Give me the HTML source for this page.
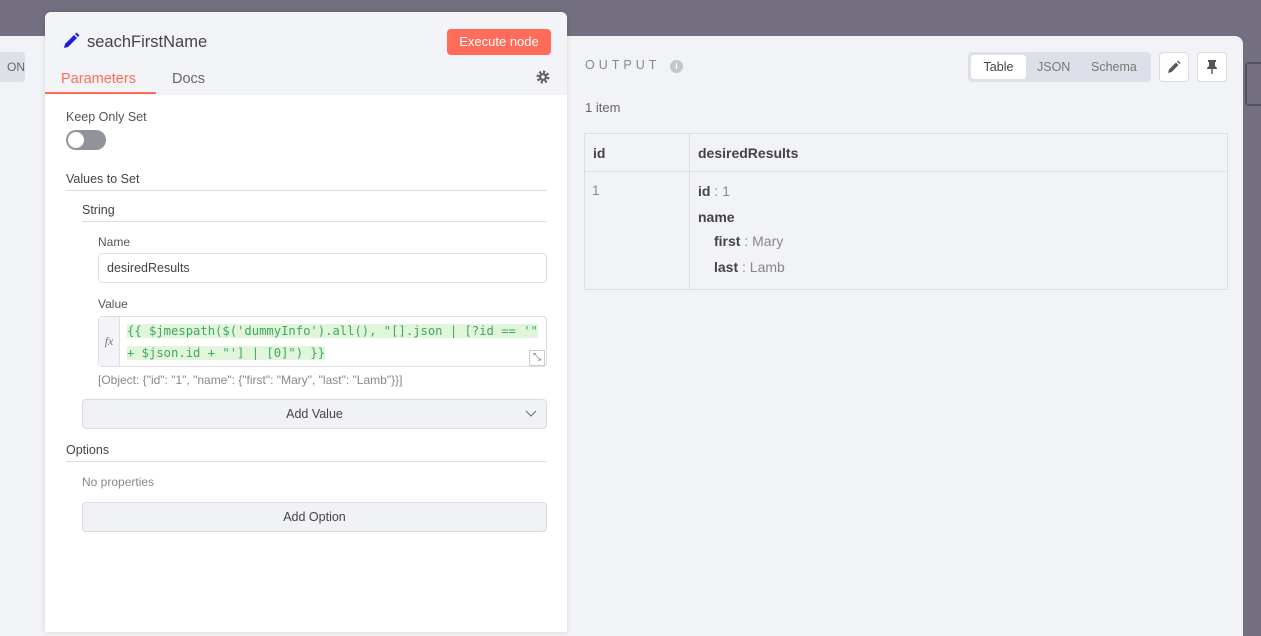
<!DOCTYPE html>
<html><head><meta charset="utf-8"><style>
*{box-sizing:border-box;margin:0;padding:0}
body{width:1261px;height:628px;overflow:hidden;background:#736f80;font-family:"Liberation Sans","DejaVu Sans",sans-serif;position:relative;color:#555}
.abs{position:absolute}
.main{left:0;top:36px;width:1243px;height:600px;background:#f2f3f6;border-radius:0 8px 0 0}
.node{left:45px;top:12px;width:522px;height:620px;background:#fff;border-radius:6px 6px 0 0;box-shadow:0 0 6px rgba(0,0,0,.12);overflow:hidden}
.hdr{left:0;top:0;width:522px;height:83px;background:#f3f4f7}
.lbl{font-size:12.5px;color:#555}
.sec{font-size:12.5px;color:#444;border-bottom:1px solid #dcdde3;padding-bottom:4px}
.inp{border:1px solid #dcdfe6;border-radius:4px;background:#fff}
.btn{background:#f1f2f5;border:1px solid #d8dbe2;border-radius:4px;text-align:center;font-size:12.5px;color:#444}
.th{font-weight:bold;font-size:14px;color:#444}
</style></head><body>
<div class="abs main"></div>
<div class="abs" style="left:1245px;top:62px;width:20px;height:44px;border:2px solid #55525f;border-radius:4px"></div>
<div class="abs" style="left:-20px;top:52px;width:45px;height:30px;background:#dde0e8;border-radius:4px;font-size:12px;color:#666;line-height:30px;text-align:right;padding-right:0px">ON</div>

<div class="abs node">
  <div class="abs hdr"></div>
  <svg class="abs" style="left:17px;top:20px" width="18" height="18" viewBox="0 0 18 18"><path d="M2 16 L3 12 L12 3 L15 6 L6 15 Z" fill="#1a1ae0"/><path d="M13 2 L14.5 0.5 L17.5 3.5 L16 5 Z" fill="#1a1ae0"/></svg>
  <div class="abs" style="left:42px;top:21px;font-size:16.5px;color:#444">seachFirstName</div>
  <div class="abs" style="left:402px;top:17px;width:104px;height:26px;background:#ff6d5a;border-radius:4px;color:#fff;font-size:13px;line-height:26px;text-align:center">Execute node</div>
  <div class="abs" style="left:16px;top:59px;font-size:14.5px;color:#ff6d5a">Parameters</div>
  <div class="abs" style="left:0;top:80px;width:111px;height:2px;background:#ff6d5a"></div>
  <div class="abs" style="left:127px;top:59px;font-size:14.5px;color:#666">Docs</div>
  <svg class="abs" style="left:491px;top:58px" width="14" height="14" viewBox="0 0 14 14"><circle cx="7" cy="7" r="5" fill="none" stroke="#666" stroke-width="3" stroke-dasharray="2.2 1.7"/><circle cx="7" cy="7" r="4" fill="#666"/><circle cx="7" cy="7" r="1.7" fill="#f3f4f7"/></svg>

  <div class="abs lbl" style="left:21px;top:98px">Keep Only Set</div>
  <div class="abs" style="left:21px;top:118px;width:40px;height:20px;border-radius:10px;background:#909399"></div>
  <div class="abs" style="left:23px;top:120px;width:16px;height:16px;border-radius:8px;background:#fff"></div>

  <div class="abs sec" style="left:21px;top:160px;width:481px">Values to Set</div>
  <div class="abs sec" style="left:37px;top:191px;width:465px">String</div>
  <div class="abs lbl" style="left:53px;top:223px;font-size:12px">Name</div>
  <div class="abs inp" style="left:53px;top:241px;width:449px;height:30px;font-size:12.5px;color:#444;line-height:28px;padding-left:8px">desiredResults</div>
  <div class="abs lbl" style="left:53px;top:285px;font-size:12px">Value</div>
  <div class="abs inp" style="left:53px;top:304px;width:449px;height:51px"></div>
  <div class="abs" style="left:54px;top:305px;width:21px;height:49px;background:#f3f4f7;border-right:1px solid #dcdfe6;font-family:'Liberation Serif',serif;font-style:italic;font-size:12px;color:#777;text-align:center;line-height:49px">fx</div>
  <div class="abs" style="left:82px;top:308px;width:420px;font-family:'DejaVu Sans Mono','Liberation Mono',monospace;font-size:12.2px;color:#3eaa5c;line-height:22px"><span style="background:#e1f4dc">{{ $jmespath($('dummyInfo').all(), "[].json | [?id == '"</span><br><span style="background:#e1f4dc">+ $json.id + "'] | [0]") }}</span></div>
  <div class="abs" style="left:484px;top:338px;width:16px;height:16px;border:1px solid #ccc;background:#fff;font-size:10px;color:#666;text-align:center;line-height:14px">⤡</div>
  <div class="abs" style="left:53px;top:361px;font-size:12px;color:#888">[Object: {"id": "1", "name": {"first": "Mary", "last": "Lamb"}}]</div>
  <div class="abs btn" style="left:37px;top:387px;width:465px;height:30px;line-height:28px">Add Value</div>
  <svg class="abs" style="left:480px;top:398px" width="12" height="8" viewBox="0 0 12 8"><path d="M1 1 L6 6 L11 1" fill="none" stroke="#777" stroke-width="1.2"/></svg>
  <div class="abs sec" style="left:21px;top:431px;width:481px">Options</div>
  <div class="abs" style="left:37px;top:463px;font-size:12px;color:#888">No properties</div>
  <div class="abs btn" style="left:37px;top:490px;width:465px;height:30px;line-height:28px">Add Option</div>
</div>

<div class="abs" style="left:585px;top:58px;font-size:12.5px;letter-spacing:4px;color:#888">OUTPUT</div>
<div class="abs" style="left:670px;top:60px;width:13px;height:13px;border-radius:7px;background:#c4c6cc;color:#fff;font-size:9px;font-weight:bold;text-align:center;line-height:13px">i</div>
<div class="abs" style="left:585px;top:100px;font-size:13px;color:#666">1 item</div>
<div class="abs" style="left:968px;top:52px;width:183px;height:30px;background:#dde0e8;border-radius:4px"></div>
<div class="abs" style="left:971px;top:55px;width:55px;height:24px;background:#fff;border-radius:3px;font-size:12.5px;color:#444;text-align:center;line-height:24px">Table</div>
<div class="abs" style="left:1037px;top:55px;font-size:12.5px;color:#777;line-height:24px">JSON</div>
<div class="abs" style="left:1091px;top:55px;font-size:12.5px;color:#777;line-height:24px">Schema</div>
<div class="abs" style="left:1159px;top:52px;width:30px;height:30px;background:#fff;border:1px solid #d8dbe2;border-radius:4px"></div>
<svg class="abs" style="left:1167px;top:60px" width="14" height="14" viewBox="0 0 14 14"><path d="M1 13 L2 9.5 L9 2.5 L11.5 5 L4.5 12 Z M10 1.5 L11 0.5 L13.5 3 L12.5 4 Z" fill="#555"/></svg>
<div class="abs" style="left:1197px;top:52px;width:30px;height:30px;background:#fff;border:1px solid #d8dbe2;border-radius:4px"></div>
<svg class="abs" style="left:1205px;top:59px" width="14" height="16" viewBox="0 0 14 16"><path d="M3 1 H11 V3 H10 V7 L12 9 V10 H2 V9 L4 7 V3 H3 Z" fill="#555"/><rect x="6.3" y="10" width="1.4" height="5" fill="#555"/></svg>

<div class="abs" style="left:584px;top:133px;width:644px;height:157px;border:1px solid #dcdee3"></div>
<div class="abs" style="left:585px;top:171px;width:642px;height:1px;background:#dcdee3"></div>
<div class="abs" style="left:689px;top:134px;width:1px;height:155px;background:#dcdee3"></div>
<div class="abs th" style="left:593px;top:145px">id</div>
<div class="abs th" style="left:698px;top:145px">desiredResults</div>
<div class="abs" style="left:592px;top:183px;font-size:13.5px;color:#888">1</div>
<div class="abs" style="left:698px;top:183px;font-size:14px;color:#888"><b style="color:#444">id</b> : 1</div>
<div class="abs" style="left:698px;top:209px;font-size:14px;color:#444;font-weight:bold">name</div>
<div class="abs" style="left:714px;top:233px;font-size:14px;color:#888"><b style="color:#444">first</b> : Mary</div>
<div class="abs" style="left:714px;top:259px;font-size:14px;color:#888"><b style="color:#444">last</b> : Lamb</div>
</body></html>
